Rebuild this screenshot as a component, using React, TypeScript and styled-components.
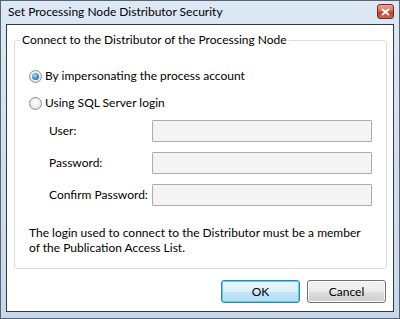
import styled, { createGlobalStyle } from "styled-components";

const Global = createGlobalStyle`
  html, body {
    margin: 0;
    padding: 0;
    background: #ffffff;
  }
  * {
    box-sizing: border-box;
  }
`;

const Window = styled.div`
  width: 400px;
  height: 319px;
  border: 1px solid #5a6470;
  background: linear-gradient(to bottom, #dde8f5 0%, #cfdcee 60%, #c8d8ec 100%);
  display: flex;
  flex-direction: column;
  padding: 0 5px 6px 5px;
  font-family: "Segoe UI", Lato, "Liberation Sans", sans-serif;
  font-size: 12px;
  color: #000;
`;

const TitleBar = styled.div`
  height: 23px;
  display: flex;
  align-items: center;
  justify-content: space-between;
  padding-left: 2px;
`;

const Title = styled.span`
  line-height: 16px;
  margin-top: -2px;
`;

const CloseBtn = styled.div`
  width: 17px;
  height: 15px;
  margin-top: -2px;
  border: 1px solid #6d2b22;
  border-radius: 3px;
  background: linear-gradient(to bottom, #eaa595 0%, #d9735a 45%, #c2401f 55%, #d0644a 100%);
  display: flex;
  align-items: center;
  justify-content: center;
`;

const Client = styled.div`
  flex: 1;
  border: 1px solid #343a40;
  background: #ffffff;
  display: flex;
  flex-direction: column;
  padding: 7px 7px 6px 7px;
`;

const Group = styled.fieldset`
  margin: 0;
  padding: 0;
  border: 1px solid #d5dfe5;
  border-radius: 3px;
`;

const Legend = styled.legend`
  margin-left: 5px;
  padding: 0 2px;
  line-height: 16px;
`;

const GroupBody = styled.div`
  padding: 20px 14px 13px 14px;
`;

const OptionRow = styled.label<{ $top?: number }>`
  display: flex;
  align-items: center;
  height: 16px;
  line-height: 16px;
  gap: 3px;
  margin-top: ${(p) => p.$top ?? 0}px;
`;

const Radio = styled.span<{ $on?: boolean }>`
  width: 13px;
  height: 13px;
  border-radius: 50%;
  border: 1px solid #8e8f8f;
  background: radial-gradient(circle at 50% 40%, #ffffff 0%, #eeeeee 50%, #d4d4d4 100%);
  display: flex;
  align-items: center;
  justify-content: center;
  &::after {
    content: "";
    display: ${(p) => (p.$on ? "block" : "none")};
    width: 7px;
    height: 7px;
    border-radius: 50%;
    background: radial-gradient(circle at 40% 35%, #a8dcf8 0%, #3a8ed0 55%, #1b5d9c 100%);
  }
`;

const Fields = styled.div`
  display: grid;
  grid-template-columns: 103px 220px;
  row-gap: 10px;
  align-items: center;
  margin: 9px 0 0 20px;
`;

const FieldLabel = styled.span`
  line-height: 16px;
`;

const Input = styled.div`
  height: 22px;
  border: 1px solid #adadad;
  border-radius: 1px;
  background: #f4f4f4;
`;

const Info = styled.p`
  margin: 19px 0 0 0;
  line-height: 15px;
`;

const Buttons = styled.div`
  display: flex;
  justify-content: flex-end;
  gap: 7px;
  margin-top: 11px;
`;

const Button = styled.button<{ $default?: boolean }>`
  width: 79px;
  height: 23px;
  padding: 0;
  font: inherit;
  color: #000;
  border-radius: 3px;
  border: 1px solid ${(p) => (p.$default ? "#3c7fb1" : "#707070")};
  box-shadow: inset 0 0 0 1px ${(p) => (p.$default ? "#48d4fb" : "#fcfcfc")};
  background: ${(p) =>
    p.$default
      ? "linear-gradient(to bottom, #e8f5fc 0%, #dcf0fa 50%, #c3e4f5 51%, #b8def3 100%)"
      : "linear-gradient(to bottom, #f2f2f2 0%, #ebebeb 50%, #dddddd 51%, #cfcfcf 100%)"};
`;

function App() {
  return (
    <>
      <Global />
      <Window>
        <TitleBar>
          <Title>Set Processing Node Distributor Security</Title>
          <CloseBtn>
            <svg width="9" height="8" viewBox="0 0 9 8">
              <path d="M1 1 L8 7 M8 1 L1 7" stroke="#ffffff" strokeWidth="2" />
            </svg>
          </CloseBtn>
        </TitleBar>
        <Client>
          <Group>
            <Legend>Connect to the Distributor of the Processing Node</Legend>
            <GroupBody>
              <OptionRow>
                <Radio $on />
                By impersonating the process account
              </OptionRow>
              <OptionRow $top={11}>
                <Radio />
                Using SQL Server login
              </OptionRow>
              <Fields>
                <FieldLabel>User:</FieldLabel>
                <Input />
                <FieldLabel>Password:</FieldLabel>
                <Input />
                <FieldLabel>Confirm Password:</FieldLabel>
                <Input />
              </Fields>
              <Info>
                The login used to connect to the Distributor must be a member
                <br />
                of the Publication Access List.
              </Info>
            </GroupBody>
          </Group>
          <Buttons>
            <Button $default>OK</Button>
            <Button>Cancel</Button>
          </Buttons>
        </Client>
      </Window>
    </>
  );
}

export default App;
